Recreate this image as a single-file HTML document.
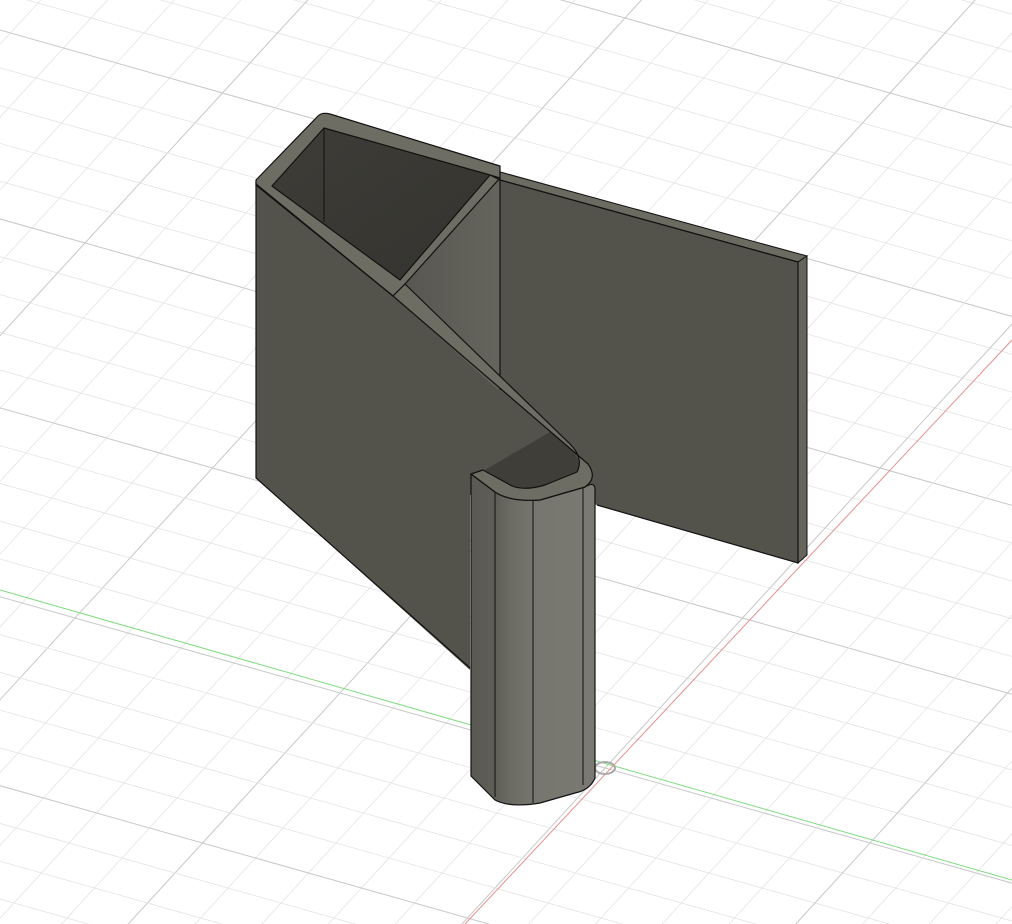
<!DOCTYPE html>
<html><head><meta charset="utf-8"><style>
html,body{margin:0;padding:0;background:#fff;width:1012px;height:924px;overflow:hidden}
svg{display:block;overflow:hidden}
</style></head><body>
<svg id="s" width="1012" height="924" viewBox="0 0 1012 924" xmlns="http://www.w3.org/2000/svg">
<defs>
<linearGradient id="cyl" x1="0" x2="1" y1="0" y2="0">
<stop offset="0" stop-color="#5a5a52"/><stop offset="0.2" stop-color="#5e5e56"/><stop offset="0.3" stop-color="#6a6a62"/><stop offset="0.5" stop-color="#76766e"/><stop offset="1" stop-color="#7a7a72"/>
</linearGradient>
<linearGradient id="inner" x1="0" x2="1" y1="0" y2="0">
<stop offset="0" stop-color="#575650"/><stop offset="0.6" stop-color="#65645c"/><stop offset="1" stop-color="#45443e"/>
</linearGradient>
<linearGradient id="pocket" x1="0" x2="1" y1="0" y2="1">
<stop offset="0" stop-color="#3e3d38"/><stop offset="1" stop-color="#34332f"/>
</linearGradient>
</defs>
<g id="grid"></g>
<line x1="0" y1="590" x2="1012" y2="880" stroke="#7fdc7f" stroke-width="1"/>
<line x1="465" y1="924" x2="1012" y2="340" stroke="#e89090" stroke-width="1"/>
<ellipse cx="605" cy="768" rx="10" ry="6" fill="none" stroke="#aaa" stroke-width="2"/>

<polygon points="500,172 807,256 807,555 798,563 597,505 500,478" fill="#53524b"/>
<polygon points="500,172 807,256 798,262 500,180" fill="#6c6b62" stroke="#111" stroke-width="1"/>
<polygon points="798,262 807,256 807,555 798,563" fill="#66655c" stroke="#111" stroke-width="1"/>
<polyline points="500,180 798,262 798,563 597,505" fill="none" stroke="#111" stroke-width="1.2"/>

<polygon points="400,290 490,185 500,178 500,440 560,470 400,300" fill="url(#inner)"/>
<line x1="500" y1="180" x2="500" y2="390" stroke="#111" stroke-width="1.2"/>

<polygon points="272,186 324,128 490,175 400,280" fill="url(#pocket)"/>
<line x1="324" y1="128" x2="324" y2="222" stroke="#111" stroke-width="1"/>

<polygon points="256,180 393,296 588,470 595,495 470,495 470,670 256,478" fill="#53524b"/>
<polyline points="256,182 256,478 470,668" fill="none" stroke="#111" stroke-width="1.2"/>

<path d="M485,470 L550,432 L572,450 Q584,464 575,476 L545,486 Q522,492 510,486 Z" fill="#3f3e39"/>

<path d="M471,474 L495,492 Q510,502 540,500 L585,487 Q596,480 595,492 L595,778 Q590,790 575,793 L540,803 Q510,808 495,800 L471,776 Z" fill="url(#cyl)" stroke="#111" stroke-width="1.2" stroke-linejoin="round"/>
<line x1="495" y1="492" x2="495" y2="797" stroke="#111" stroke-width="1"/>
<line x1="533" y1="501" x2="533" y2="803" stroke="#111" stroke-width="1"/>
<line x1="583" y1="488" x2="583" y2="785" stroke="#111" stroke-width="1"/>

<path d="M256,180 L318,116 Q322,112 330,114 L500,166 L500,180 L490,175 L324,128 L272,186 L400,280 L490,175 L500,178 L405,284 L393,296 L256,185 Z" fill="#6e6d63" stroke="#111" stroke-width="1.2" stroke-linejoin="round"/>
<path d="M405,284 L570,444 Q584,458 577,472 L545,485 Q525,491 512,486 L483,470 L471,474 L495,492 Q510,502 540,500 L585,487 Q598,478 588,464 L393,296 Z" fill="#6e6d63" stroke="#111" stroke-width="1.2" stroke-linejoin="round"/>
<line x1="256" y1="184" x2="393" y2="296" stroke="#111" stroke-width="1.2"/>
</svg>
<script>
var g=document.getElementById('grid'),ns='http://www.w3.org/2000/svg';
var ox=605,oy=768,u=[53,15],v=[-27.5,30];
function L(x1,y1,x2,y2,c,w){var l=document.createElementNS(ns,'line');l.setAttribute('x1',x1);l.setAttribute('y1',y1);l.setAttribute('x2',x2);l.setAttribute('y2',y2);l.setAttribute('stroke',c);l.setAttribute('stroke-width',w);g.appendChild(l);}
for(var k=-40;k<=40;k++){
 var maj=(k%5==0);var c=maj?'#c8c8c8':'#e4e4e4';var w=maj?1:0.8;
 var px=ox+k*v[0],py=oy+k*v[1];
 L(px-40*u[0],py-40*u[1],px+40*u[0],py+40*u[1],c,w);
 px=ox+k*u[0];py=oy+k*u[1];
 L(px-40*v[0],py-40*v[1],px+40*v[0],py+40*v[1],c,w);
}
</script>
</body></html>
